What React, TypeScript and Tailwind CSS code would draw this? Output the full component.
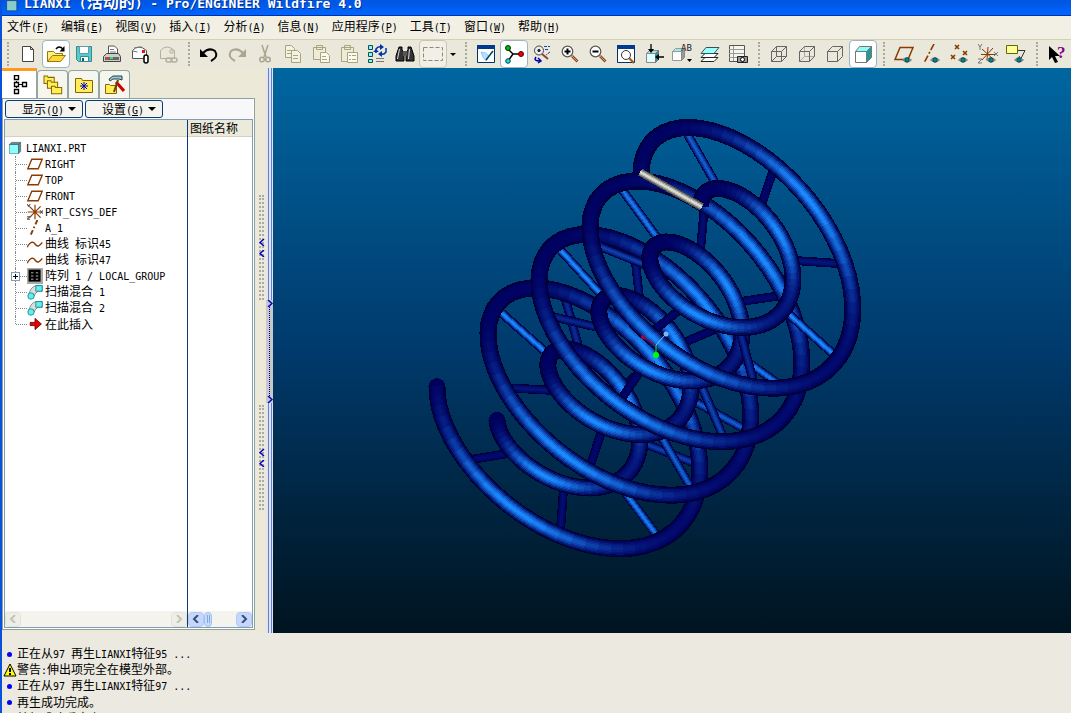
import type { ReactNode } from "react";

const cjk = "font-['Noto_Sans_CJK_SC',sans-serif]";
const mono = "font-['DejaVu_Sans_Mono','Noto_Sans_CJK_SC',monospace]";

// Latin runs take half the width of a Chinese character
function Mixed({ text, latin = "text-[10px]" }: { text: string; latin?: string }) {
  const runs = text.match(/[\x00-\x7f]+|[^\x00-\x7f]+/g) ?? [];
  return (
    <span className="whitespace-pre">
      {runs.map((run, i) =>
        run.charCodeAt(0) < 128 ? (
          <span key={i} className={`${mono} ${latin}`}>
            {run}
          </span>
        ) : (
          <span key={i} className={cjk}>
            {run}
          </span>
        )
      )}
    </span>
  );
}

function Mnemonic({ label, letter }: { label: string; letter: string }) {
  return (
    <span className={`whitespace-pre text-xs ${cjk}`}>
      {label}
      <span className={`text-[10px] ${mono}`}>
        (<u>{letter}</u>)
      </span>
    </span>
  );
}

const menus = [
  { label: "文件", letter: "F" },
  { label: "编辑", letter: "E" },
  { label: "视图", letter: "V" },
  { label: "插入", letter: "I" },
  { label: "分析", letter: "A" },
  { label: "信息", letter: "N" },
  { label: "应用程序", letter: "P" },
  { label: "工具", letter: "T" },
  { label: "窗口", letter: "W" },
  { label: "帮助", letter: "H" },
];

function Svg({ children, size = 20 }: { children: ReactNode; size?: number }) {
  return (
    <svg width={size} height={size} viewBox="0 0 20 20" fill="none" stroke="#222" aria-hidden="true" className="shrink-0">
      {children}
    </svg>
  );
}

const eye = (
  <g>
    <path d="M8.500 16q4-4.500 9 0q-4 4-9 0z" fill="#a9b8b8" stroke="#667" strokeWidth=".8" />
    <circle cx="13" cy="16" r="2.200" fill="#088" stroke="#033" strokeWidth=".8" />
  </g>
);

const lens = (
  <g>
    <path d="M12 12l5.500 5.500" stroke="#8a4a20" strokeWidth="2.600" />
    <path d="M12 12l5 5" stroke="#d09a70" strokeWidth="1" />
    <circle cx="7.500" cy="7.500" r="5.300" fill="#fff" stroke="#555" strokeWidth="1.200" />
  </g>
);

const cubeEdges = "M2.500 7.500h10v10h-10zM2.500 7.500l5-5h10l-5 5M17.500 2.500v10l-5 5";

const fileTools = [
  { name: "新建", icon: <path d="M4.500 2.500h8l3 3v12h-11zM12.500 2.500v3h3" fill="#fff" stroke="#444" /> },
  {
    name: "打开",
    boxed: true,
    icon: (
      <g>
        <path d="M1.500 17.500v-10h6l2 2h7v3" fill="#ffee88" stroke="#997a00" />
        <path d="M1.500 17.500l5-6h13l-5 6z" fill="#ffd83a" stroke="#997a00" />
        <path d="M10 5q3-4 7 0" stroke="#000" strokeWidth="1.400" />
        <path d="M18.500 2v5.500h-5z" fill="#000" stroke="none" />
      </g>
    ),
  },
  {
    name: "保存",
    icon: (
      <g>
        <path d="M2.500 2.500h15v15h-13l-2-2z" fill="#5cc" stroke="#3a8a90" />
        <path d="M5.500 2.500h9v7h-9z" fill="#fff" stroke="#69a" />
        <path d="M6.500 12.500h8v5h-8z" fill="#fff" stroke="#3a8a90" />
        <path d="M8 14h2v3h-2z" fill="#066" stroke="none" />
      </g>
    ),
  },
  {
    name: "打印",
    icon: (
      <g>
        <path d="M6.500 11v-9h6l3 3v6" fill="#fff" stroke="#555" />
        <path d="M8 5.500h4M8 8h6" stroke="#777" />
        <path d="M1.500 17.500v-5l3-3h12l2 3v5z" fill="#ccc" stroke="#444" />
        <path d="M3 13h14v3H3z" fill="#666" stroke="none" />
        <path d="M4 13h2v2H4z" fill="#f33" stroke="none" />
        <path d="M8 13h3v2H8z" fill="#3e3" stroke="none" />
      </g>
    ),
  },
  {
    name: "发送邮件",
    icon: (
      <g>
        <path d="M2.500 14.500v-8q6-7 14 0v8z" fill="#fff" stroke="#555" />
        <path d="M2.500 7l5 1M4 4l8-1" stroke="#777" />
        <path d="M12 6h3v3h-3z" fill="#e11" stroke="none" />
        <rect x="14" y="11" width="4" height="8" rx="2" fill="#fff" stroke="#000" strokeWidth="1.500" />
      </g>
    ),
  },
  {
    name: "发送链接",
    icon: (
      <g stroke="#b5b09c">
        <path d="M2.500 14.500v-8q6-7 14 0v8z" />
        <path d="M12 6h3v3h-3z" />
        <rect x="8" y="14" width="6" height="4" rx="2" strokeWidth="1.500" />
        <rect x="13" y="14" width="6" height="4" rx="2" strokeWidth="1.500" />
      </g>
    ),
  },
];

const editTools = [
  {
    name: "撤消",
    icon: (
      <g>
        <path d="M4 9q6-6 12-2q4 6-4 10" stroke="#000" strokeWidth="2" />
        <path d="M1 5v8h8z" fill="#000" stroke="none" />
      </g>
    ),
  },
  {
    name: "重做",
    icon: (
      <g>
        <path d="M16 9q-6-6-12-2q-4 6 4 10" stroke="#aaa690" strokeWidth="2" />
        <path d="M19 5v8h-8z" fill="#aaa690" stroke="none" />
      </g>
    ),
  },
  {
    name: "剪切",
    icon: (
      <g stroke="#aaa690" strokeWidth="1.500">
        <path d="M7 1l4 12M13 1l-4 12" />
        <circle cx="7" cy="15.500" r="2.300" />
        <circle cx="13" cy="15.500" r="2.300" />
      </g>
    ),
  },
  {
    name: "复制",
    icon: (
      <g stroke="#a9a47c" fill="#f4f2e2">
        <path d="M2.500 1.500h6l3 3v9h-9z" />
        <path d="M4 6.500h5M4 9.500h5" />
        <path d="M8.500 6.500h6l3 3v9h-9z" />
        <path d="M10 11.500h5M10 14.500h5" />
      </g>
    ),
  },
  {
    name: "粘贴",
    icon: (
      <g stroke="#a9a47c" fill="#eeebd8">
        <path d="M2.500 3.500h12v12h-12zM5.500 5.500v-4h6v4z" />
        <path d="M9.500 8.500h6l3 3v7h-9z" fill="#faf9f0" />
        <path d="M11 12.500h4M11 15.500h5" />
      </g>
    ),
  },
  {
    name: "选择性粘贴",
    icon: (
      <g stroke="#a9a47c" fill="#eeebd8">
        <path d="M2.500 3.500h12v14h-12zM5.500 5.500v-4h6v4z" />
        <path d="M8.500 8.500h10v10h-10z" fill="#faf9f0" />
        <path d="M10 11.500h2M13 11.500h4M10 15.500h2M13 15.500h4" />
      </g>
    ),
  },
  {
    name: "再生",
    icon: (
      <g>
        <path d="M1.500 1.500h4v4h-4zM1.500 8.500h4v4h-4zM1.500 15.500h4v3h-4z" fill="#9ee" stroke="#055" />
        <path d="M9 9V5q2-3 5-2M19 4v4q-2 3-5 2" stroke="#03a" strokeWidth="1.500" />
        <path d="M13 0v6l4-3zM15 7v6l-4-3zM6 8l3-3 3 3z" fill="#03a" stroke="none" />
        <path d="M9 14.500h8M9 17.500h8" stroke="#777" />
      </g>
    ),
  },
  {
    name: "查找",
    icon: (
      <g>
        <path d="M4 3h3v3l2 2v9H1v-5zM13 3h3l3 9v5h-8V8l2-2z" fill="#333" stroke="#000" />
        <path d="M8 7h4v5H8z" fill="#555" stroke="none" />
        <path d="M4.500 5l-2 10M14.500 5l-1 10" stroke="#ddd" />
      </g>
    ),
  },
];

const viewTools = [
  {
    name: "重画",
    icon: (
      <g>
        <path d="M1.500 2.500h17v16h-17z" fill="#fff" stroke="#036" />
        <path d="M1 1h18v4H1z" fill="#003a8c" stroke="none" />
        <path d="M5 8q5 0 8 4l-3 5q-4-4-5-9z" fill="#bdf" stroke="#8cf" />
        <path d="M10 16l7-9" stroke="#046" strokeWidth="1.500" />
      </g>
    ),
  },
  {
    name: "旋转中心",
    boxed: true,
    icon: (
      <g>
        <path d="M3 4l6 6-5 7M9 10h8" stroke="#000" strokeWidth="1.500" />
        <circle cx="4" cy="4" r="2.500" fill="#0b0" stroke="#030" />
        <circle cx="17" cy="10" r="2.500" fill="#e00" stroke="#500" />
        <circle cx="4" cy="17" r="2.300" fill="#2dd" stroke="#044" />
      </g>
    ),
  },
  {
    name: "定向模式",
    icon: (
      <g>
        <circle cx="7" cy="6.500" r="4.500" fill="#eee" stroke="#444" />
        <circle cx="7" cy="6.500" r="1.200" fill="#333" />
        <path d="M10 10l6 5" stroke="#8a4a20" strokeWidth="2" />
        <path d="M12 2.500h6M13 5.500h4M18 8l-4 3" stroke="#14a" strokeDasharray="3 1" />
        <path d="M4 13q-3 4 4 4M6 14l3 3-3 2" stroke="#00a" strokeWidth="1.500" />
      </g>
    ),
  },
  {
    name: "放大",
    icon: (
      <g>
        {lens}
        <path d="M4.500 7.500h6M7.500 4.500v6" stroke="#000" strokeWidth="2" />
      </g>
    ),
  },
  {
    name: "缩小",
    icon: (
      <g>
        {lens}
        <path d="M4.500 7.500h6" stroke="#000" strokeWidth="2" />
      </g>
    ),
  },
  {
    name: "重新调整",
    icon: (
      <g>
        <path d="M1.500 1.500h17v17h-17z" fill="#fff" stroke="#036" />
        <path d="M1 1h18v4H1z" fill="#003a8c" stroke="none" />
        <path d="M13 14l5 5" stroke="#a05a20" strokeWidth="2.200" />
        <circle cx="10" cy="11" r="4.500" fill="#fff" stroke="#333" />
      </g>
    ),
  },
  {
    name: "重定向",
    icon: (
      <g>
        <path d="M2.500 9.500h9v9h-9z" fill="#dff" stroke="#888" />
        <path d="M2.500 9.500l3-3h9l-3 3z" fill="#8ee" stroke="#888" />
        <path d="M14.500 6.500v9l-3 3v-9z" fill="#299" stroke="#777" />
        <path d="M7 0v8M20 13h-7" stroke="#000" strokeWidth="1.300" />
        <path d="M4 5h6l-3 4zM15 10v6l-4-3z" fill="#000" stroke="none" />
      </g>
    ),
  },
  {
    name: "视图列表",
    icon: (
      <g>
        <path d="M.5 7.500h9v9h-9z" fill="#fff" stroke="#999" />
        <path d="M.5 7.500l3-3h9l-3 3z" fill="#9ee" stroke="#999" />
        <path d="M12.500 4.500v9l-3 3v-9z" fill="#999" stroke="#888" />
        <path d="M15 15h5l-2.500 3z" fill="#000" stroke="none" />
        <text x="9" y="7" fontSize="9" fill="#222" stroke="none" fontFamily="DejaVu Sans Mono, monospace">
          AB
        </text>
      </g>
    ),
  },
  {
    name: "层",
    icon: (
      <g>
        <path d="M1 17.500l4-4h13l-4 4z" fill="#fff" />
        <path d="M1 13.500l4-4h13l-4 4z" fill="#fff" />
        <path d="M1 9.500l5-6h13l-5 6z" fill="#9ff" stroke="#355" />
      </g>
    ),
  },
  {
    name: "视图管理器",
    icon: (
      <g>
        <path d="M1.500 1.500h15v16h-15z" fill="#f5f5ee" stroke="#555" />
        <path d="M1 5.500h15M1 9.500h15M1 13.500h10M5.500 2v15" stroke="#999" />
        <path d="M9.500 12.500h10v6h-10z" fill="#999" stroke="#222" />
        <circle cx="14.500" cy="15.500" r="2" fill="#fff" stroke="#000" />
      </g>
    ),
  },
];

const displayTools = [
  {
    name: "线框",
    icon: (
      <g stroke="#666">
        <path d={cubeEdges} />
        <path d="M7.500 2.500v10h10M7.500 12.500l-5 5" />
      </g>
    ),
  },
  {
    name: "隐藏线",
    icon: (
      <g stroke="#666">
        <path d="M7.500 2.500v10h10M7.500 12.500l-5 5" stroke="#aaa" />
        <path d={cubeEdges} />
      </g>
    ),
  },
  { name: "无隐藏线", icon: <path d={cubeEdges} stroke="#666" /> },
  {
    name: "着色",
    boxed: true,
    icon: (
      <g stroke="#777">
        <path d="M2.500 7.500h11v11h-11z" fill="#fff" />
        <path d="M2.500 7.500l4-5h12l-5 5z" fill="#8ff" />
        <path d="M18.500 2.500v11l-5 5v-11z" fill="#299" />
      </g>
    ),
  },
];

const datumTools = [
  {
    name: "基准平面",
    icon: (
      <g>
        <path d="M1 15.500l5-12h13l-5 12z" stroke="#8b3a00" strokeWidth="1.500" />
        {eye}
      </g>
    ),
  },
  {
    name: "基准轴",
    icon: (
      <g>
        <path d="M12 0L2 19" stroke="#8b3a00" strokeWidth="1.600" strokeDasharray="7 2 2 2" />
        {eye}
      </g>
    ),
  },
  {
    name: "基准点",
    icon: (
      <g>
        <path d="M5 1l4 4M9 1L5 5M13 7l4 4M17 7l-4 4M1 11l4 4M5 11l-4 4" stroke="#8b3a00" strokeWidth="1.600" />
        {eye}
      </g>
    ),
  },
  {
    name: "坐标系",
    icon: (
      <g>
        <path d="M10 3l-1 13M4 5l11 10M3 10.500h14M15 4L4 16" stroke="#8b3a00" />
        <path d="M0 0l2 3 2-3M2 3v3M0 15h4l-4 4h4M16 8l4 4M20 8l-4 4" stroke="#777" />
        {eye}
      </g>
    ),
  },
  {
    name: "注释",
    icon: (
      <g>
        <path d="M0.500 1.500h11v8h-11z" fill="#ff9" stroke="#660" />
        <path d="M12 6.500h7l-4 8M13 12l2 3" stroke="#333" />
        {eye}
      </g>
    ),
  },
];

function ToolButton({ name, boxed, icon }: { name: string; boxed?: boolean; icon: ReactNode }) {
  return (
    <button
      type="button"
      aria-label={name}
      className={`grid h-7 w-7 shrink-0 place-items-center rounded-sm border ${
        boxed ? "border-[#9ab4c8] bg-white" : "border-transparent"
      }`}
    >
      <Svg>{icon}</Svg>
    </button>
  );
}

function Grip() {
  return (
    <div className="flex w-[13px] shrink-0 justify-center">
      <div className="h-6 border-l-2 border-dotted border-[#aaa89c]" />
    </div>
  );
}

function Toolbar() {
  return (
    <div className="flex h-[29px] shrink-0 items-center overflow-hidden border-t border-[#d5d0b4] bg-[#eae7db]">
      <div className="flex w-3 shrink-0 justify-center">
        <div className="h-6 border-l-2 border-dotted border-[#aaa89c]" />
      </div>
      {fileTools.map((tool) => (
        <ToolButton key={tool.name} {...tool} />
      ))}
      <Grip />
      {editTools.map((tool) => (
        <ToolButton key={tool.name} {...tool} />
      ))}
      <button type="button" aria-label="选取" className="grid h-7 w-7 shrink-0 place-items-center rounded-sm border border-[#c8c5b4] bg-[#f1efe6]">
        <Svg>
          <path d="M.5 3.500h19v13H.5z" stroke="#8c8a7c" strokeDasharray="4 2" />
        </Svg>
      </button>
      <button type="button" aria-label="选取选项" className="grid h-7 w-3 shrink-0 place-items-center">
        <span className="border-x-[3px] border-t-[3px] border-x-transparent border-t-black" />
      </button>
      <Grip />
      {viewTools.map((tool) => (
        <ToolButton key={tool.name} {...tool} />
      ))}
      <Grip />
      {displayTools.map((tool) => (
        <ToolButton key={tool.name} {...tool} />
      ))}
      <Grip />
      {datumTools.map((tool) => (
        <ToolButton key={tool.name} {...tool} />
      ))}
      <Grip />
      <ToolButton
        name="上下文帮助"
        icon={
          <g>
            <path d="M2 2v14l3-3 3 6 3-1-3-6h5z" fill="#000" stroke="none" />
            <text x="10" y="14" fontSize="17" fontWeight="bold" fill="#808" stroke="none" fontFamily="Liberation Serif, serif">
              ?
            </text>
          </g>
        }
      />
    </div>
  );
}

const folder = <path d="M1.500 5.500h5l1 2h9v9h-15z" fill="#fe5" stroke="#860" strokeWidth="1.500" />;

const tabs = [
  {
    name: "文件夹浏览器",
    icon: (
      <g transform="scale(.68)">
        <g transform="translate(0 -4)">{folder}</g>
        <g transform="translate(5 3)">{folder}</g>
        <g transform="translate(11 11)">{folder}</g>
      </g>
    ),
  },
  {
    name: "收藏夹",
    icon: (
      <g>
        <path d="M1.500 3.500h6l1 2h10v12h-17z" fill="#fe5" stroke="#860" />
        <path d="M10 7v8M6 11h8M7 8l6 6M13 8l-6 6" stroke="#00c" />
      </g>
    ),
  },
  {
    name: "连接",
    icon: (
      <g>
        <path d="M0.500 9.500h4l1 1h6v8h-11z" fill="#fe5" stroke="#860" />
        <path d="M4 4l4-3h9v4l-3-1h-6l-3 2z" fill="#9cc" stroke="#245" />
        <path d="M11 7l8 9" stroke="#c00" strokeWidth="3" />
        <path d="M13 5l-4 12" stroke="#640" strokeWidth="2" />
      </g>
    ),
  },
];

function PanelTabs() {
  return (
    <div className="flex h-[30px] items-end" role="tablist">
      <button
        type="button"
        role="tab"
        aria-selected="true"
        aria-label="模型树"
        className="grid h-[30px] w-[35px] place-items-center border-t-[3px] border-r border-t-[#ff9a1f] border-r-[#91a7a4] bg-white"
      >
        <Svg>
          <path d="M7.500 6v2M7.500 13v-2M10 9.500h3" stroke="#000" />
          <path d="M5.500.500h4v4h-4zM5.500 7.500h4v4h-4zM5.500 14.500h4v4h-4zM13.500 7.500h4v4h-4z" fill="#fff" stroke="#000" strokeWidth="1.400" />
        </Svg>
      </button>
      {tabs.map((tab) => (
        <button
          key={tab.name}
          type="button"
          role="tab"
          aria-selected="false"
          aria-label={tab.name}
          className="grid h-7 w-[31px] place-items-center rounded-t-sm border border-b-0 border-[#91a7a4] bg-[#f6f5ee]"
        >
          <Svg>{tab.icon}</Svg>
        </button>
      ))}
    </div>
  );
}

const plane = <path d="M1 16l5-12h13l-5 12z" stroke="#8b3a00" strokeWidth="1.700" />;
const curve = <path d="M0 14q6-10 10-4t9-2" stroke="#8b3a00" strokeWidth="1.700" />;
const sweep = (
  <g>
    <path d="M2 14q2-10 9-12h8v7h-5q-4 2-5 6z" fill="#ddd" stroke="#777" />
    <path d="M11 2h8v7h-8z" fill="#6ee" stroke="#088" />
    <circle cx="5" cy="15" r="4" fill="#6ee" stroke="#088" />
  </g>
);

const treeItems = [
  { label: "RIGHT", icon: plane },
  { label: "TOP", icon: plane },
  { label: "FRONT", icon: plane },
  {
    label: "PRT_CSYS_DEF",
    icon: (
      <g>
        <path d="M10 1v18M1 10h16M3 3l14 14M17 3L3 17" stroke="#8b3a00" strokeWidth="1.500" />
        <path d="M0 0l2 3 2-3M0 16h4l-4 3h4M16 8l4 4M20 8l-4 4" stroke="#555" strokeWidth="1.300" />
      </g>
    ),
  },
  { label: "A_1", icon: <path d="M13 0L4 20" stroke="#8b3a00" strokeWidth="2.400" strokeDasharray="6 3 2 3" /> },
  { label: "曲线 标识45", icon: curve },
  { label: "曲线 标识47", icon: curve },
  {
    label: "阵列 1 / LOCAL_GROUP",
    expandable: true,
    icon: (
      <g>
        <path d="M0 0h20v20H0z" fill="#aaa" stroke="none" />
        <path d="M2 2h15v15H2z" fill="#000" stroke="none" />
        <path d="M5 6h3M11 6h3M5 10h3M11 10h3M5 14h3M11 14h3" stroke="#777" strokeWidth="2" />
      </g>
    ),
  },
  { label: "扫描混合 1", icon: sweep },
  { label: "扫描混合 2", icon: sweep },
  { label: "在此插入", icon: <path d="M4 8h6V3l8 7-8 7v-5H4z" fill="#e00" stroke="#400" /> },
];

function ModelTree() {
  return (
    <ul className="pt-[3px] pl-[3px] text-xs leading-4 text-black" role="tree">
      <li role="treeitem" aria-expanded="true">
        <div className="flex h-4 items-center gap-1">
          <Svg size={14}>
            <path d="M2 5h13v13H2z" fill="#8ff" stroke="#588" />
            <path d="M2 5l3-3h13l-3 3zM18 2v13l-3 3V5z" fill="#688" stroke="#466" />
          </Svg>
          <Mixed text="LIANXI.PRT" />
        </div>
        <ul role="group">
          {treeItems.map((item, i) => (
            <li key={item.label} role="treeitem" className="flex h-4 items-center pl-[7px]">
              <span className="relative flex w-3 items-center self-stretch">
                <span
                  className={`border-l border-dotted border-[#888] ${
                    i === treeItems.length - 1 ? "h-2 self-start" : "self-stretch"
                  }`}
                />
                <span className="flex-1 border-t border-dotted border-[#888]" />
                {item.expandable && (
                  <button
                    type="button"
                    aria-label="展开"
                    className="absolute top-1 -left-1 grid h-[9px] w-[9px] place-items-center border border-[#7b9ebd] bg-white"
                  >
                    <svg width="5" height="5" stroke="#000" aria-hidden="true">
                      <path d="M0 2.500h5M2.500 0v5" />
                    </svg>
                  </button>
                )}
              </span>
              <Svg size={16}>{item.icon}</Svg>
              <span className="pl-0.5">
                <Mixed text={item.label} />
              </span>
            </li>
          ))}
        </ul>
      </li>
    </ul>
  );
}

function ScrollArrow({ dir, disabled }: { dir: "left" | "right"; disabled?: boolean }) {
  return (
    <button
      type="button"
      disabled={disabled}
      aria-label={dir === "left" ? "向左滚动" : "向右滚动"}
      className={`grid h-[15px] w-4 place-items-center rounded-sm border ${
        disabled ? "border-[#e5e3d8] bg-[#efeee6] text-[#c4c2b6]" : "border-[#b4c8f6] bg-[#c6d6fd] text-[#34507c]"
      }`}
    >
      <svg width="8" height="8" viewBox="0 0 8 8" fill="none" stroke="currentColor" strokeWidth="2" aria-hidden="true">
        <path d={dir === "left" ? "M6 0L2 4l4 4" : "M2 0l4 4-4 4"} />
      </svg>
    </button>
  );
}

function PanelButton({ label, letter }: { label: string; letter: string }) {
  return (
    <button
      type="button"
      className="flex h-[18px] w-[78px] items-center justify-end gap-1 rounded-[3px] border border-[#0a3c74] bg-[#f4f3ee] pr-1.5 leading-4"
    >
      <Mnemonic label={label} letter={letter} />
      <span className="border-x-4 border-t-4 border-x-transparent border-t-black" />
    </button>
  );
}

function NavigatorPanel() {
  return (
    <aside className="flex w-[253px] shrink-0 flex-col pb-[3px]">
      <PanelTabs />
      <div className="flex min-h-0 flex-1 flex-col border border-[#8aa3a0] bg-white px-px pb-px">
        <div className="flex h-5 items-center gap-0.5 bg-[#f8f7fa] pl-px">
          <PanelButton label="显示" letter="O" />
          <PanelButton label="设置" letter="G" />
        </div>
        <div className="flex min-h-0 flex-1 border border-[#7f9db9]">
          <div className="flex min-w-0 flex-1 flex-col">
            <div className="h-[17px] border-b border-[#d8cfc0] bg-[#ebeadb]" />
            <div className="flex-1">
              <ModelTree />
            </div>
            <div className="flex h-4 items-center justify-between bg-[#f4f3ee]">
              <ScrollArrow dir="left" disabled />
              <ScrollArrow dir="right" disabled />
            </div>
          </div>
          <div className="flex w-[65px] flex-col border-l border-[#0a3c74]">
            <div className={`flex h-[17px] items-center border-b border-[#d8cfc0] bg-[#ebeadb] pl-0.5 text-xs ${cjk}`}>
              图纸名称
            </div>
            <div className="flex-1" />
            <div className="flex h-4 items-center bg-[#f4f3ee]">
              <ScrollArrow dir="left" />
              <span className="flex h-[15px] w-2 items-center justify-center rounded-sm border border-[#a4c0f0] bg-[#c6dcfd]">
                <span className="h-2 w-[3px] border-x border-[#7fa8e0]" />
              </span>
              <span className="ml-auto">
                <ScrollArrow dir="right" />
              </span>
            </div>
          </div>
        </div>
      </div>
    </aside>
  );
}

function SashGrip() {
  return (
    <button
      type="button"
      aria-label="折叠导航器"
      className="flex h-[105px] w-[5px] flex-col items-center justify-center gap-1 border-r-2 border-l-2 border-dotted border-[#aaa]"
    >
      <SashArrow d="M5 0L1 3.500l4 3.500" />
      <SashArrow d="M5 0L1 3.500l4 3.500" />
    </button>
  );
}

function SashArrow({ d }: { d: string }) {
  return (
    <svg width="6" height="7" fill="none" stroke="#0000c0" strokeWidth="1.500" aria-hidden="true" className="shrink-0">
      <path d={d} />
    </svg>
  );
}

function Sash() {
  return (
    <div className="flex w-[18px] shrink-0 bg-[#ece9d8]">
      <div className="flex w-[11px] flex-col items-end pt-[127px] pr-0.5">
        <SashGrip />
        <div className="h-[105px]" />
        <SashGrip />
      </div>
      <div className="flex w-[7px] flex-col items-center bg-[#e4e4ee]">
        <div className="h-[232px] w-1 border-x border-[#6080d8]" />
        <button
          type="button"
          aria-label="展开浏览器"
          className="flex h-[103px] w-[7px] flex-col items-center justify-between bg-[#c8c8cc]"
        >
          <SashArrow d="M1 0l4 3.500-4 3.500" />
          <span className="flex-1 border-l border-dotted border-[#0000a0]" />
          <SashArrow d="M1 0l4 3.500-4 3.500" />
        </button>
        <div className="w-1 flex-1 border-x border-[#6080d8]" />
      </div>
    </div>
  );
}

// ---- coil model: two concentric helices of four turns joined by spokes ----

type Vec = [number, number, number];
type Piece = { a: Vec; b: Vec; width: number; depth: number; light: number; grey?: boolean };

const TURNS = 4;
const STEPS = 60;
const SPOKES = 29;
const SPOKE_ANGLE = 0.872;
const TAU = Math.PI * 2;
const origin: Vec = [555, 450, 0];
const pitch: Vec = [51, -53.5, 54];
const outer: [Vec, Vec] = [[-118, -63.4, 49], [-10, 98, 104]];
const inner: [Vec, Vec] = [[-58, -29.5, 24], [-5, 47, 50]];

function helix([u, v]: [Vec, Vec], t: number): Vec {
  const c = Math.cos(t);
  const s = Math.sin(t);
  return [0, 1, 2].map((i) => origin[i] + (pitch[i] * t) / TAU + u[i] * c + v[i] * s) as Vec;
}

function piece(a: Vec, b: Vec, width: number, lift = 0, grey?: boolean): Piece {
  const d = [b[0] - a[0], b[1] - a[1], b[2] - a[2]];
  const facing = 1 - (d[2] / Math.hypot(d[0], d[1], d[2])) ** 2;
  return { a, b, width, depth: (a[2] + b[2]) / 2 + lift, light: Math.pow(facing, 3.2), grey };
}

function mix(a: Vec, b: Vec, k: number): Vec {
  return [a[0] + (b[0] - a[0]) * k, a[1] + (b[1] - a[1]) * k, a[2] + (b[2] - a[2]) * k];
}

function buildCoil() {
  const pieces: Piece[] = [];
  for (const ring of [outer, inner]) {
    for (let i = 0; i < TURNS * STEPS; i++) {
      pieces.push(piece(helix(ring, (i / STEPS) * TAU), helix(ring, ((i + 1) / STEPS) * TAU), 17));
    }
  }
  for (let k = 1; k <= SPOKES; k++) {
    const t = TURNS * TAU - (SPOKES - k) * SPOKE_ANGLE;
    const last = k === SPOKES;
    // spokes stop at the tube surface, only the last one runs centre to centre
    const trim = last ? 0 : 0.08;
    const a = mix(helix(outer, t), helix(inner, t), trim);
    const b = mix(helix(outer, t), helix(inner, t), 1 - trim);
    for (let j = 0; j < 6; j++) {
      pieces.push(piece(mix(a, b, j / 6), mix(a, b, (j + 1) / 6), last ? 8 : 9, last ? 40 : -24, last));
    }
  }
  return pieces.sort((p, q) => p.depth - q.depth);
}

const bright: Vec = [26, 138, 255];
const layers = [
  { scale: 1, level: 0 },
  { scale: 0.86, level: 0.15 },
  { scale: 0.7, level: 0.38 },
  { scale: 0.54, level: 0.6 },
  { scale: 0.38, level: 0.82 },
  { scale: 0.2, level: 1 },
];

function shade(light: number, level: number, grey?: boolean) {
  if (grey) {
    const g = Math.round(70 + 150 * level);
    return `rgb(${g},${g},${g - 5})`;
  }
  const base: Vec = [0, 0, 50 + 46 * Math.min(1, level * 3)];
  return `rgb(${mix(base, bright, light * level).map(Math.round).join(",")})`;
}

const coil = buildCoil();
const tips = [helix(outer, 0), helix(inner, 0)];

function Coil() {
  return (
    <g shapeRendering="crispEdges">
      {tips.map((p, i) => (
        <circle key={i} cx={p[0]} cy={p[1]} r="8.500" fill="#000058" />
      ))}
      {coil.map((p, i) => {
        const dx = p.b[0] - p.a[0];
        const dy = p.b[1] - p.a[1];
        const len = Math.hypot(dx, dy) || 1;
        const ox = dx / len;
        const oy = dy / len;
        return layers.map((layer) => (
          <line
            key={`${i}-${layer.scale}`}
            x1={p.a[0] - ox}
            y1={p.a[1] - oy}
            x2={p.b[0] + ox}
            y2={p.b[1] + oy}
            strokeWidth={p.width * layer.scale}
            stroke={shade(p.light, layer.level, p.grey)}
          />
        ));
      })}
    </g>
  );
}

function Viewport() {
  return (
    <main className="min-w-0 flex-1 overflow-hidden bg-linear-to-b from-[#0066a0] via-[#003a6c] to-[#001420]">
      <svg
        viewBox="273 68 798 565"
        preserveAspectRatio="xMidYMid meet"
        className="block h-full w-full"
        role="img"
        aria-label="LIANXI"
      >
        <Coil />
        <path d="M656 345l-12-7" stroke="#b00030" />
        <path d="M656 345l9-10" stroke="#7cc4ff" />
        <path d="M656 345v9" stroke="#00ff00" />
        <circle cx="643" cy="337" r="2" fill="#b00030" />
        <circle cx="666" cy="334" r="2.500" fill="#7cb8ff" />
        <circle cx="656" cy="355" r="3" fill="#00ff00" />
      </svg>
    </main>
  );
}

const messages = [
  { text: "正在从97 再生LIANXI特征95 ..." },
  { text: "警告:伸出项完全在模型外部。", warning: true },
  { text: "正在从97 再生LIANXI特征97 ..." },
  { text: "再生成功完成。" },
  { text: "特征成功重定义。" },
];

function MessageLog() {
  return (
    <ul className="h-20 shrink-0 overflow-hidden bg-[#ebe9e0] pt-[13px] text-xs leading-4 text-black">
      {messages.map((message, i) => (
        <li key={i} className="flex h-4 items-center">
          <span className="grid w-[15px] shrink-0 place-items-center">
            {message.warning ? (
              <svg width="14" height="14" viewBox="0 0 14 14" aria-hidden="true">
                <path d="M7 1l6 12H1z" fill="#ff0" stroke="#000" />
                <path d="M7 5v4M7 10v2" stroke="#000" strokeWidth="2" />
              </svg>
            ) : (
              i < 4 && <span className="h-[5px] w-[5px] rounded-full bg-[#0000ff]" />
            )}
          </span>
          <Mixed text={message.text} />
        </li>
      ))}
    </ul>
  );
}

export default function App() {
  return (
    <div className="flex h-screen flex-col overflow-hidden border-l-2 border-[#0a50d8] bg-[#ece9d8]">
      <header className="flex h-4 shrink-0 items-end gap-1.5 overflow-hidden border-b border-[#0030a8] bg-linear-to-b from-[#0054e0] to-[#0066ff] pb-[3px] pl-1 text-base leading-4 font-bold text-white">
        <Svg size={12}>
          <path d="M1 1h17v17H1z" fill="#8cc" stroke="#036" />
        </Svg>
        <h1 className="[text-shadow:1px_1px_0_#003090]">
          <Mixed text="LIANXI (活动的) - Pro/ENGINEER Wildfire 4.0" latin="text-[13px]" />
        </h1>
      </header>
      <nav className="flex h-[23px] shrink-0 items-center gap-3 bg-[#f2f0e4] pb-1 pl-[5px]">
        {menus.map((menu) => (
          <button key={menu.letter} type="button" className="leading-4">
            <Mnemonic label={menu.label} letter={menu.letter} />
          </button>
        ))}
      </nav>
      <Toolbar />
      <div className="flex min-h-0 flex-1">
        <NavigatorPanel />
        <Sash />
        <Viewport />
      </div>
      <MessageLog />
    </div>
  );
}
